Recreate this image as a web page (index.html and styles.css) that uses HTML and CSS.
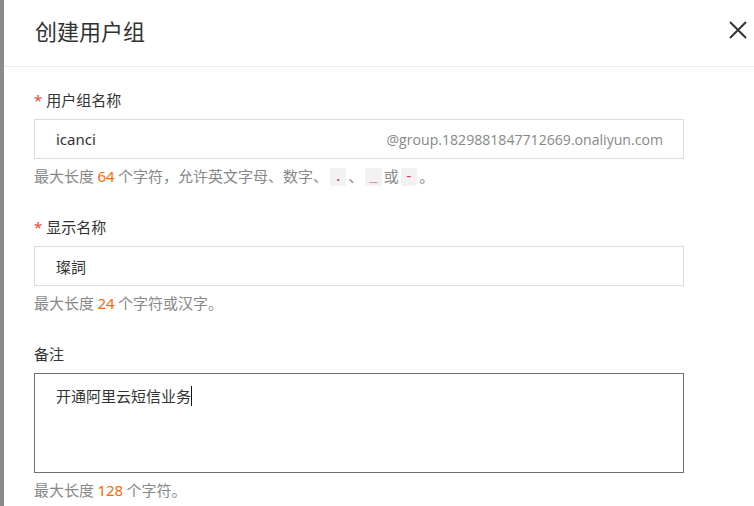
FILE: index.html
```html
<!DOCTYPE html>
<html lang="zh-CN">
<head>
<meta charset="utf-8">
<title>创建用户组</title>
<link rel="stylesheet" href="styles.css">
</head>
<body>
<div class="page">
  <div class="mask"></div>
  <div class="panel">
    <div class="header">
      <h1 class="title">创建用户组</h1>
      <button class="close" aria-label="关闭">
        <svg width="20" height="20" viewBox="0 0 20 20"><path d="M2 2 L18 18 M18 2 L2 18" stroke="#333" stroke-width="2" fill="none"/></svg>
      </button>
    </div>
    <div class="body">
      <div class="field">
        <div class="label"><span class="req">*</span>用户组名称</div>
        <div class="input">
          <span class="value">icanci</span>
          <span class="suffix">@group.1829881847712669.onaliyun.com</span>
        </div>
        <div class="help">最大长度 <span class="num">64</span> 个字符，允许英文字母、数字、<code class="chip">.</code>、<code class="chip">_</code>或<code class="chip">-</code>。</div>
      </div>
      <div class="field">
        <div class="label"><span class="req">*</span>显示名称</div>
        <div class="input">
          <span class="value">璨詞</span>
        </div>
        <div class="help">最大长度 <span class="num">24</span> 个字符或汉字。</div>
      </div>
      <div class="field">
        <div class="label">备注</div>
        <div class="textarea">
          <span class="value">开通阿里云短信业务</span><span class="caret"></span>
        </div>
        <div class="help">最大长度 <span class="num">128</span> 个字符。</div>
      </div>
    </div>
  </div>
</div>
</body>
</html>
```

FILE: styles.css
```css
* { box-sizing: border-box; }
html, body { margin: 0; padding: 0; background: #fff; }
body {
  font-family: "Noto Sans", "Noto Sans CJK SC", sans-serif;
  color: #333;
  width: 754px;
  height: 506px;
  overflow: hidden;
}
.page { display: flex; height: 506px; overflow: hidden; }
.mask { width: 4px; background: #8a8a8a; flex: none; }
.panel { flex: 1; display: flex; flex-direction: column; }
.header {
  flex: none;
  height: 67px;
  border-bottom: 1px solid #eeeeee;
  display: flex;
  align-items: center;
  justify-content: space-between;
  padding: 0 6px 0 31px;
}
.title {
  margin: 0;
  font-family: "Noto Sans CJK SC", sans-serif;
  font-weight: 400;
  font-size: 22px;
  color: #333;
  line-height: 30px;
  padding-bottom: 7px;
}
.close {
  border: 0;
  background: none;
  padding: 0;
  width: 20px;
  height: 20px;
  margin-bottom: 7px;
  display: flex;
}
.body { flex: none; padding: 22px 0 0 30px; }
.field { width: 650px; margin-bottom: 29px; }
.label {
  font-family: "Noto Sans CJK SC", sans-serif;
  font-size: 15px;
  line-height: 22px;
  color: #333;
  margin-bottom: 8px;
}
.req { color: #e8483b; margin-right: 4px; font-family: "Noto Sans", sans-serif; }
.input {
  height: 40px;
  border: 1px solid #dcdcdc;
  display: flex;
  align-items: center;
  justify-content: space-between;
  padding: 0 20px 0 21px;
  font-size: 15px;
}
.value { color: #333; font-family: "Noto Sans", "Noto Sans CJK SC", sans-serif; font-size: 15px; }
.suffix { color: #888; font-family: "Open Sans", sans-serif; font-size: 14.1px; }
.help {
  font-family: "Noto Sans CJK SC", sans-serif;
  font-size: 15px;
  line-height: 22px;
  height: 22px;
  color: #888;
  margin-top: 6px;
}
.num { color: #ff6a00; font-family: "Noto Sans", sans-serif; }
.chip {
  display: inline-block;
  background: #f2f2f2;
  color: #e8356a;
  font-family: "Liberation Mono", monospace;
  font-size: 14px;
  line-height: 18px;
  padding: 0 4px;
  border-radius: 2px;
  margin: 0 2px;
  vertical-align: 1px;
}
.textarea {
  height: 100px;
  border: 1px solid #707070;
  padding: 10px 21px;
  font-family: "Noto Sans CJK SC", sans-serif;
  font-size: 15px;
  line-height: 24px;
  display: flex;
  align-items: flex-start;
}
.textarea .value { font-family: "Noto Sans CJK SC", sans-serif; }
.caret { width: 1px; height: 20px; background: #111; margin-top: 2px; }
```
